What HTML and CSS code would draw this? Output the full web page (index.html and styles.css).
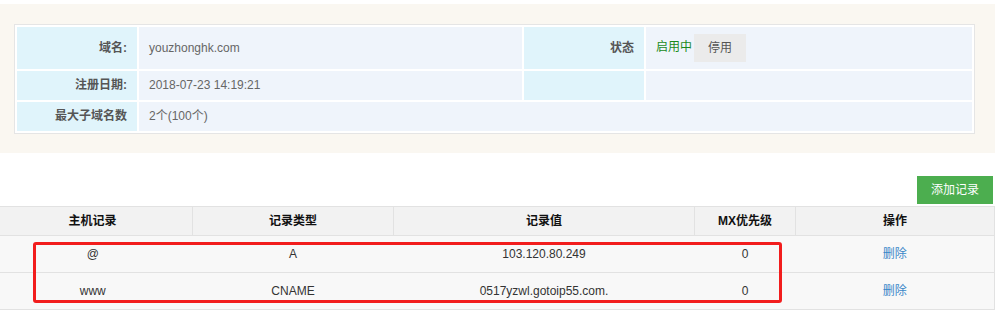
FILE: index.html
```html
<!DOCTYPE html>
<html>
  <head>
    <meta charset="utf-8">
    <title>域名解析</title>
    <link rel="stylesheet" href="styles.css">
  </head>
  <body>
    <div class="info">
      <table class="info-table">
        <colgroup>
          <col class="col-label">
          <col class="col-value">
          <col class="col-label">
          <col class="col-wide">
        </colgroup>
        <tr class="row-first">
          <td class="label">域名:</td>
          <td class="value">youzhonghk.com</td>
          <td class="label">状态</td>
          <td class="value"><span class="on">启用中</span><a class="btn-gray">停用</a></td>
        </tr>
        <tr>
          <td class="label">注册日期:</td>
          <td class="value">2018-07-23 14:19:21</td>
          <td class="label"></td>
          <td class="value"></td>
        </tr>
        <tr>
          <td class="label">最大子域名数</td>
          <td class="value" colspan="3">2个(100个)</td>
        </tr>
      </table>
    </div>

    <div class="records">
      <div class="toolbar">
        <a class="btn-green">添加记录</a>
      </div>
      <table class="rec-table">
        <colgroup>
          <col style="width: 200px">
          <col style="width: 201px">
          <col style="width: 301px">
          <col style="width: 101px">
          <col style="width: 199px">
        </colgroup>
        <thead>
          <tr>
            <th>主机记录</th>
            <th>记录类型</th>
            <th>记录值</th>
            <th>MX优先级</th>
            <th>操作</th>
          </tr>
        </thead>
        <tbody>
          <tr>
            <td>@</td>
            <td>A</td>
            <td>103.120.80.249</td>
            <td>0</td>
            <td><a class="link">删除</a></td>
          </tr>
          <tr>
            <td>www</td>
            <td>CNAME</td>
            <td>0517yzwl.gotoip55.com.</td>
            <td>0</td>
            <td><a class="link">删除</a></td>
          </tr>
        </tbody>
      </table>
    </div>

    <div class="highlight"></div>
  </body>
</html>
```

FILE: styles.css
```css
body {
  margin: 0;
  position: relative;
  font-family: 'Liberation Sans', Arial, 'Noto Sans CJK SC', sans-serif;
  font-size: 12px;
  color: #333;
  background: #fff;
  overflow: hidden;
}
.info {
  margin-top: 4px;
  width: 995px;
  box-sizing: border-box;
  padding: 20px 20px 19px 14px;
  background: #faf7f1;
}
.info-table {
  width: 961px;
  table-layout: fixed;
  border-collapse: separate;
  border-spacing: 2px;
  border: 1px solid #e5e5e5;
  background: #fff;
}
.col-label { width: 120px; }
.col-value { width: 383px; }
.col-wide { width: 326px; }
.info-table td {
  padding: 6px 10px;
  line-height: 17px;
  height: 17px;
}
.info-table .row-first td {
  height: 30px;
}
.label {
  background: #e0f4fb;
  text-align: right;
  font-weight: bold;
  color: #555;
}
.value {
  background: #eff4fb;
  color: #666;
}
.on {
  color: #1a8a1a;
}
.btn-gray {
  display: inline-block;
  margin-left: 2px;
  padding: 0 14px;
  height: 28px;
  line-height: 28px;
  background: #ebebeb;
  color: #555;
  vertical-align: middle;
}
.records {
  margin-left: -8px;
  width: 1002px;
}
.toolbar {
  display: flex;
  justify-content: flex-end;
  padding-top: 23px;
  margin-bottom: 2px;
}
.btn-green {
  display: block;
  margin-right: 1px;
  padding: 0 14px;
  height: 28px;
  line-height: 28px;
  background: #4cae4f;
  color: #fff;
}
.rec-table {
  width: 1002px;
  table-layout: fixed;
  border-collapse: collapse;
  border: 1px solid #e2e2e2;
}
.rec-table th {
  background: #f2f2f2;
  color: #111;
  font-weight: bold;
  line-height: 16px;
  padding: 6px 4px;
  border: 1px solid #e2e2e2;
}
.rec-table td {
  background: #f8f8f8;
  text-align: center;
  line-height: 16px;
  padding: 10px 4px;
  border-top: 1px solid #e2e2e2;
  border-bottom: 1px solid #e2e2e2;
}
.link {
  color: #3a87c8;
}
.highlight {
  position: absolute;
  left: 33px;
  top: 242px;
  width: 743px;
  height: 55px;
  border: 3px solid #f21d1d;
  border-radius: 3px;
}
```
